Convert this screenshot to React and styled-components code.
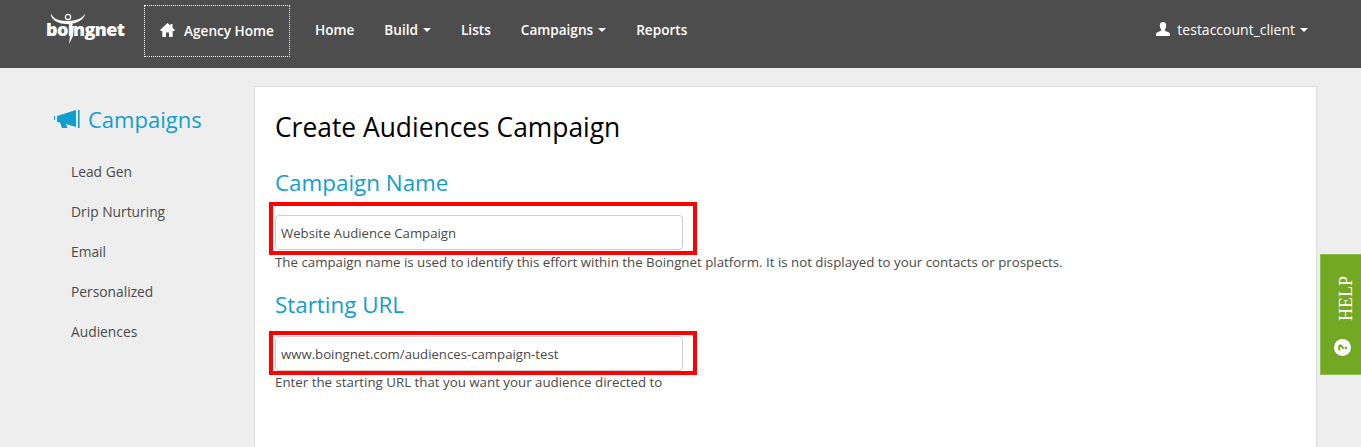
import styled, { createGlobalStyle } from "styled-components";

const GlobalStyle = createGlobalStyle`
  html, body {
    margin: 0;
    height: 100%;
    background: #eeeeee;
    font-family: "Open Sans", "Liberation Sans", sans-serif;
    overflow: hidden;
  }
`;

const Shell = styled.div`
  height: 100vh;
  overflow: hidden;
  position: relative;
`;

const Header = styled.header`
  height: 68px;
  background: #4d4d4d;
  display: flex;
  align-items: flex-start;
  padding-left: 46px;
  padding-right: 53px;
  color: #fff;
`;

const Logo = styled.div`
  width: 80px;
  margin-right: 18px;
  height: 44px;
  padding-top: 11px;
  position: relative;
  font-size: 18px;
  font-weight: 800;
  letter-spacing: -0.6px;
  line-height: 24px;
  color: #fff;

  svg {
    position: absolute;
    left: 0;
    top: 12px;
  }
`;

const LogoText = styled.span`
  display: block;
  margin-top: 6px;
`;

const Nav = styled.nav`
  display: flex;
  align-items: center;
  height: 58px;
  flex: ${(props) => (props.$right ? "none" : "1")};
`;

const NavLink = styled.a`
  font-size: 13.6px;
  font-weight: 600;
  color: #fff;
  display: flex;
  align-items: center;
  margin-right: 30px;
  white-space: nowrap;
`;

const AgencyLink = styled(NavLink)`
  border: 1px dotted #fff;
  width: 146px;
  height: 52px;
  box-sizing: border-box;
  justify-content: center;
  margin-right: 25px;
  margin-top: 4px;
  padding-bottom: 2px;
  svg { margin-right: 9px; }
`;

const Caret = styled.span`
  width: 0;
  height: 0;
  margin-left: 5px;
  margin-top: 2px;
  border-left: 4px solid transparent;
  border-right: 4px solid transparent;
  border-top: 4px solid #fff;
`;

const UserMenu = styled(NavLink)`
  margin-right: 0;
  font-weight: 500;
  font-size: 14px;
  svg { margin-right: 7px; }
`;

const Page = styled.div`
  display: flex;
  align-items: flex-start;
  padding-top: 18px;
`;

const Sidebar = styled.aside`
  width: 254px;
  flex: none;
  box-sizing: border-box;
  padding-left: 54px;
  padding-top: 17px;
`;

const SideTitle = styled.h2`
  margin: 0 0 27px;
  font-size: 22px;
  font-weight: 500;
  line-height: 32px;
  color: #0f9fcf;
  display: flex;
  align-items: center;
  svg { margin-right: 7px; }
`;

const SideList = styled.ul`
  list-style: none;
  margin: 0;
  padding: 0 0 0 17px;
`;

const SideItem = styled.li`
  font-size: 13.8px;
  line-height: 20px;
  color: #4a4a4a;
  margin-bottom: 20px;
`;

const Card = styled.main`
  width: 1063px;
  height: 361px;
  flex: none;
  box-sizing: border-box;
  background: #fff;
  border: 1px solid #dddddd;
  border-bottom: 0;
  padding: 22px 20px;
`;

const Title = styled.h1`
  margin: 0 0 22px;
  font-size: 26.4px;
  font-weight: 400;
  line-height: 36px;
  color: #000;
`;

const SectionTitle = styled.h3`
  margin: 0;
  font-size: 22.4px;
  font-weight: 500;
  line-height: 32px;
  color: #0f9fcf;
`;

const RedBox = styled.div`
  box-sizing: border-box;
  width: 428px;
  height: ${(props) => (props.$tall ? "53px" : "44px")};
  margin-left: -6px;
  margin-top: ${(props) => (props.$tall ? "3px" : "10px")};
  border: 4px solid #ff0000;
  padding: ${(props) => (props.$tall ? "9px 6px 1px 2px" : "1px 6px 0 2px")};
`;

const Input = styled.input`
  display: block;
  box-sizing: border-box;
  width: 408px;
  height: 35px;
  border: 1px solid #cccccc;
  border-radius: 4px;
  padding: 0 5px;
  font-family: inherit;
  font-size: 13.2px;
  color: #4a4a4a;
  background: #fff;
  outline: none;
`;

const Hint = styled.p`
  margin: 0 0 19px;
  font-size: 13.3px;
  line-height: 15px;
  color: #4a4a4a;
`;

const HelpTab = styled.aside`
  position: absolute;
  right: 0;
  top: 254px;
  width: 41px;
  height: 121px;
  box-sizing: border-box;
  background: #72a824;
  border: 1px solid #8fbb50;
  border-right: 0;
  color: #fff;
  display: flex;
  flex-direction: column;
  align-items: center;
  padding-top: 21px;
  padding-left: 3px;
`;

const HelpText = styled.span`
  writing-mode: vertical-rl;
  transform: rotate(180deg);
  font-family: "Liberation Serif", serif;
  font-size: 18px;
  line-height: 18px;
  height: 45px;
  margin-left: 6px;
`;

const HelpDot = styled.span`
  margin-top: 18px;
  width: 17px;
  height: 17px;
  border-radius: 50%;
  background: #fff;
  color: #72a824;
  font-size: 13px;
  font-weight: 800;
  line-height: 17px;
  text-align: center;
  transform: rotate(-90deg);
`;

const HomeIcon = () => (
  <svg width="15" height="14" viewBox="0 0 15 14" fill="#fff">
    <path d="M7.5 0 L10.5 2.8 V1 H12.5 V4.7 L15 7 L14 8 H12.7 V14 H9 V9.5 H6 V14 H2.3 V8 H1 L0 7 Z" />
  </svg>
);

const UserIcon = () => (
  <svg width="14" height="14" viewBox="0 0 14 14" fill="#fff">
    <path d="M7 0 C9.2 0 10.3 1.7 10.2 3.7 C10.1 5.4 9.5 6.7 8.8 7.6 C8.6 8.4 9 8.9 10 9.3 C12 10 13.6 10.6 14 12 V14 H0 V12 C0.4 10.6 2 10 4 9.3 C5 8.9 5.4 8.4 5.2 7.6 C4.5 6.7 3.9 5.4 3.8 3.7 C3.7 1.7 4.8 0 7 0 Z" />
  </svg>
);

const MegaphoneIcon = () => (
  <svg width="27" height="20" viewBox="0 0 27 20" fill="#0f9fcf">
    <path d="M0 7 H1 V11 H0 Z" />
    <path d="M3 7 L22 1 V18 L12 15 L13.5 19 H8 L6 13.5 L3 13 Z" />
    <path d="M24 1 H25.6 V19 H24 Z" />
  </svg>
);

const LogoMark = () => (
  <svg width="80" height="32" viewBox="0 0 80 32" fill="#fff">
    <path d="M5 1 C6 6 12 9 21 9 C30 9 38 6 39 1 C39 7 32 12 21 12 C11 12 4 7 5 1 Z" />
    <circle cx="22" cy="5" r="2.6" fill="none" stroke="#fff" strokeWidth="1.2" />
    <path d="M24 14 H28 L27 24 L23 32 L24 24 Z" />
  </svg>
);

const navItems = [
  { label: "Home" },
  { label: "Build", caret: true },
  { label: "Lists" },
  { label: "Campaigns", caret: true },
  { label: "Reports" },
];

const sideItems = ["Lead Gen", "Drip Nurturing", "Email", "Personalized", "Audiences"];

const App = () => {
  return (
    <Shell>
      <GlobalStyle />
      <Header>
        <Logo>
          <LogoMark />
          <LogoText>boingnet</LogoText>
        </Logo>
        <Nav>
          <AgencyLink><HomeIcon />Agency Home</AgencyLink>
          {navItems.map((item) => (
            <NavLink key={item.label}>
              {item.label}
              {item.caret ? <Caret /> : null}
            </NavLink>
          ))}
        </Nav>
        <Nav as="div" $right>
          <UserMenu><UserIcon />testaccount_client<Caret /></UserMenu>
        </Nav>
      </Header>
      <Page>
        <Sidebar>
          <SideTitle><MegaphoneIcon />Campaigns</SideTitle>
          <SideList>
            {sideItems.map((item) => (
              <SideItem key={item}>{item}</SideItem>
            ))}
          </SideList>
        </Sidebar>
        <Card>
          <Title>Create Audiences Campaign</Title>
          <SectionTitle>Campaign Name</SectionTitle>
          <RedBox $tall>
            <Input readOnly value="Website Audience Campaign" />
          </RedBox>
          <Hint>The campaign name is used to identify this effort within the Boingnet platform. It is not displayed to your contacts or prospects.</Hint>
          <SectionTitle>Starting URL</SectionTitle>
          <RedBox>
            <Input readOnly value="www.boingnet.com/audiences-campaign-test" />
          </RedBox>
          <Hint>Enter the starting URL that you want your audience directed to</Hint>
        </Card>
      </Page>
      <HelpTab>
        <HelpText>HELP</HelpText>
        <HelpDot>?</HelpDot>
      </HelpTab>
    </Shell>
  );
};

export default App;
